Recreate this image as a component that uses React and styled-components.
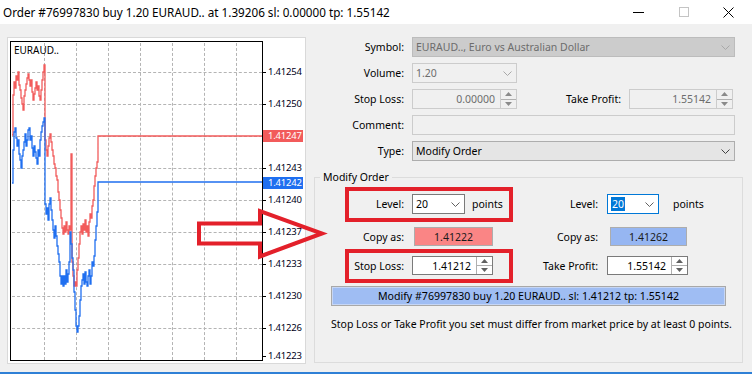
import React from 'react';
import styled, { createGlobalStyle } from 'styled-components';

const Global = createGlobalStyle`
  html, body { margin: 0; padding: 0; background: #f0f0f0; }
  body { font-family: "Noto Sans", "Open Sans", sans-serif; font-size: 10.5px; color: #000; }
  * { box-sizing: border-box; }
`;

const Window = styled.div`
  position: relative;
  width: 752px;
  height: 374px;
  overflow: hidden;
  background: #f0f0f0;
  display: flex;
  flex-direction: column;
`;

const TitleBar = styled.div`
  height: 24px;
  flex-shrink: 0;
  background: #fff;
  display: flex;
  align-items: center;
`;

const Title = styled.div`
  flex: 1;
  padding-left: 3px;
  font-size: 11.7px;
  white-space: nowrap;
`;

const Controls = styled.div`
  display: flex;
  height: 100%;
  margin-right: 1px;
`;

const CtrlBtn = styled.div`
  width: 45px;
  display: flex;
  align-items: center;
  justify-content: center;
`;

const Main = styled.div`
  flex: 1;
  display: flex;
`;

const BottomLine = styled.div`
  height: 2px;
  flex-shrink: 0;
  background: #2f80d6;
`;

const ChartPanel = styled.div`
  margin: 13px 0 0 7px;
  width: 299px;
  height: 327px;
  border: 1px solid #d9d9d9;
  background: #fff;
  display: flex;
  padding: 3px 0 0 2px;
`;

const Plot = styled.div`
  position: relative;
  width: 253px;
  height: 320px;
  border: 1px solid #000;
  flex-shrink: 0;
  background: #fff;
`;

const GridLineH = styled.div`
  position: absolute;
  left: 1px;
  right: 0;
  height: 0;
  border-top: 1px dashed #b4b4b4;
`;

const GridLineV = styled.div`
  position: absolute;
  top: 1px;
  bottom: 0;
  width: 0;
  border-left: 1px dashed #b4b4b4;
`;

const PlotSvg = styled.svg`
  display: block;
  position: relative;
  z-index: 1;
`;

const Symbol = styled.div`
  position: absolute;
  left: 3px;
  top: 1px;
  font-size: 10px;
  z-index: 2;
`;

const Axis = styled.div`
  position: relative;
  flex: 1;
`;

const AxisLabel = styled.div`
  position: absolute;
  left: 0;
  width: 40px;
  height: 12px;
  padding-left: 5px;
  font-size: 9.5px;
  line-height: 12px;
  letter-spacing: -0.2px;
  color: ${p => (p.bg ? '#fff' : '#000018')};
  background: ${p => p.bg || 'transparent'};
  &::before {
    content: '';
    position: absolute;
    left: 0;
    top: 6px;
    width: 3px;
    height: 1px;
    background: ${p => (p.bg ? 'transparent' : '#000')};
  }
`;

const FormPanel = styled.div`
  flex: 1;
  display: flex;
  flex-direction: column;
  padding-top: 13px;
`;

const Row = styled.div`
  display: flex;
  align-items: center;
  height: 20px;
  margin-bottom: ${p => p.mb ?? 6}px;
`;

const Label = styled.div`
  width: ${p => p.w}px;
  margin-right: ${p => p.gap ?? 8}px;
  text-align: right;
  flex-shrink: 0;
  white-space: nowrap;
`;

const variants = {
  symbol: { bg: '#cccccc', border: '#bcbcbc', color: '#6d6d6d' },
  disabled: { bg: '#f0f0f0', border: '#cccccc', color: '#6d6d6d' },
  combo: { bg: '#e5e5e5', border: '#adadad', color: '#000' },
  edit: { bg: '#ffffff', border: '#7a7a7a', color: '#000' },
  focus: { bg: '#ffffff', border: '#0078d7', color: '#000' },
};

const Field = styled.div`
  width: ${p => p.w}px;
  height: ${p => p.h || 20}px;
  margin-left: ${p => p.ml || 0}px;
  border: 1px solid ${p => variants[p.v].border};
  background: ${p => variants[p.v].bg};
  color: ${p => variants[p.v].color};
  display: flex;
  align-items: center;
  flex-shrink: 0;
`;

const FieldText = styled.div`
  flex: 1;
  padding: 0 ${p => (p.right ? 5 : 3)}px 0 ${p => (p.right ? 0 : 3)}px;
  text-align: ${p => (p.right ? 'right' : 'left')};
  white-space: nowrap;
  overflow: hidden;
`;

const Selected = styled.span`
  background: #0078d7;
  color: #fff;
  padding: 0 1px;
`;

const ChevronBox = styled.div`
  width: 17px;
  height: 100%;
  display: flex;
  align-items: center;
  justify-content: center;
`;

const SpinBox = styled.div`
  width: 16px;
  height: 100%;
  border-left: 1px solid ${p => p.c || '#cccccc'};
  display: flex;
  flex-direction: column;
`;

const SpinHalf = styled.div`
  flex: 1;
  display: flex;
  align-items: center;
  justify-content: center;
  & + & { border-top: 1px solid ${p => p.c || '#cccccc'}; }
`;

const Chevron = ({ color = '#606060' }) => (
  <ChevronBox>
    <svg width="9" height="5" viewBox="0 0 9 5">
      <polyline points="0.5,0.5 4.5,4.5 8.5,0.5" fill="none" stroke={color} strokeWidth="1" />
    </svg>
  </ChevronBox>
);

const Spinner = ({ c, tri = '#606060' }) => (
  <SpinBox c={c}>
    <SpinHalf c={c}>
      <svg width="7" height="4" viewBox="0 0 7 4"><polygon points="3.5,0 7,4 0,4" fill={tri} /></svg>
    </SpinHalf>
    <SpinHalf c={c}>
      <svg width="7" height="4" viewBox="0 0 7 4"><polygon points="0,0 7,0 3.5,4" fill={tri} /></svg>
    </SpinHalf>
  </SpinBox>
);

const Group = styled.fieldset`
  margin: 9px 0 0 8px;
  width: 429px;
  height: 193px;
  padding: 0;
  border: 1px solid #dcdcdc;
  min-width: 0;
`;

const Legend = styled.legend`
  margin-left: 5px;
  padding: 0 3px;
  line-height: 14px;
  font-size: 10.5px;
`;

const GroupBody = styled.div`
  padding-top: 10px;
  display: flex;
  flex-direction: column;
`;

const GRow = styled.div`
  display: flex;
  align-items: center;
  height: ${p => p.h || 20}px;
  margin-bottom: ${p => p.mb || 0}px;
`;

const Half = styled.div`
  display: flex;
  align-items: center;
  width: ${p => p.w}px;
  flex-shrink: 0;
`;

const Points = styled.div`
  margin-left: ${p => p.ml}px;
`;

const CopyBtn = styled.div`
  width: ${p => p.w}px;
  height: 19px;
  margin-left: ${p => p.ml}px;
  background: ${p => p.bg};
  border: 1px solid #adadad;
  display: flex;
  align-items: center;
  justify-content: center;
  color: #1a1a1a;
`;

const ModifyBtn = styled.div`
  margin-left: 16px;
  width: 395px;
  height: 20px;
  background: #9fbdf3;
  border: 1px solid #a8a8a8;
  box-shadow: inset 0 0 0 1px #c6d6f5;
  display: flex;
  align-items: center;
  justify-content: center;
  white-space: nowrap;
  font-size: 10.6px;
`;

const Note = styled.div`
  margin-top: 11px;
  padding-left: 16px;
  line-height: 14px;
  white-space: nowrap;
`;

const RedBox = styled.div`
  position: absolute;
  left: ${p => p.x}px;
  top: ${p => p.y}px;
  width: ${p => p.w}px;
  height: ${p => p.h}px;
  border: 4px solid #e3202a;
  pointer-events: none;
`;

const ArrowSvg = styled.svg`
  position: absolute;
  left: 190px;
  top: 200px;
  pointer-events: none;
  z-index: 3;
`;

/* chart data in page coordinates, shifted to plot-local */
const OX = 11;
const OY = 42;

const redPts = [
  [12,135],[13,95],[14,82],[15,88],[16,76],[17,80],[18,72],[19,85],[20,90],[21,98],[22,104],[23,110],[24,96],[25,90],
  [26,84],[27,78],[28,74],[29,80],[30,86],[31,80],[32,92],[33,100],[34,94],[35,88],[36,82],[37,90],[38,86],[39,96],
  [40,100],[41,90],[42,80],[43,72],[44,65],[45,140],[46,150],[47,156],[48,146],[49,138],[50,134],[51,142],[52,150],
  [53,156],[54,164],[55,168],[56,176],[57,180],[58,192],[59,200],[60,210],[61,218],[62,228],[63,234],[64,226],
  [65,232],[66,222],[67,230],[68,234],[69,226],[70,230],[71,154],[72,262],[73,276],[74,286],[75,282],[76,286],
  [77,270],[78,258],[79,244],[80,232],[81,226],[82,234],[83,224],[84,230],[85,220],[86,232],[87,226],[88,236],
  [89,222],[90,214],[91,218],[92,206],[93,200],[94,186],[95,176],[96,168],[97,162],[98,136]
];

const bluePts = [
  [12,183],[13,150],[14,132],[15,128],[16,138],[17,146],[18,140],[19,154],[20,160],[21,168],[22,156],[23,150],
  [24,142],[25,134],[26,146],[27,140],[28,130],[29,128],[30,140],[31,136],[32,148],[33,156],[34,146],[35,152],
  [36,158],[37,164],[38,150],[39,156],[40,140],[41,132],[42,126],[43,122],[44,118],[45,204],[46,214],[47,208],
  [48,220],[49,204],[50,198],[51,210],[52,220],[53,230],[54,238],[55,226],[56,236],[57,246],[58,254],[59,262],
  [60,276],[61,284],[62,276],[63,286],[64,276],[65,284],[66,270],[67,282],[68,274],[69,262],[70,232],[71,244],
  [72,258],[73,270],[74,292],[75,310],[76,326],[77,332],[78,326],[79,316],[80,300],[81,286],[82,280],[83,274],
  [84,284],[85,272],[86,282],[87,286],[88,276],[89,270],[90,284],[91,276],[92,262],[93,266],[94,256],[95,240],
  [96,226],[97,212],[98,182]
];

const stepPath = pts => {
  let d = `M${pts[0][0] - OX} ${pts[0][1] - OY}`;
  for (let i = 1; i < pts.length; i++) {
    d += ` H${pts[i][0] - OX} V${pts[i][1] - OY}`;
  }
  return d;
};

const gridY = [72, 104, 136, 168, 200, 232, 264, 296, 328];
const gridX = [44, 76, 108, 140, 172, 204, 236];

const axisLabels = [
  { y: 72, t: '1.41254' },
  { y: 104, t: '1.41250' },
  { y: 136, t: '1.41247', bg: '#f25b5b' },
  { y: 168, t: '1.41243' },
  { y: 183, t: '1.41242', bg: '#1f6ff0' },
  { y: 200, t: '1.41240' },
  { y: 232, t: '1.41237' },
  { y: 264, t: '1.41233' },
  { y: 296, t: '1.41230' },
  { y: 328, t: '1.41226' },
  { y: 356, t: '1.41223' },
];

const Chart = () => (
  <ChartPanel>
    <Plot>
      {gridY.map(y => (
        <GridLineH key={'h' + y} style={{ top: y - 42 }} />
      ))}
      {gridX.map(x => (
        <GridLineV key={'v' + x} style={{ left: x - 11 }} />
      ))}
      <PlotSvg width="251" height="318" viewBox="0 0 251 318">
        <path d={stepPath(redPts) + ` H${262 - OX}`} fill="none" stroke="#f25b5b" strokeWidth="1.3" />
        <path d={stepPath(bluePts) + ` H${262 - OX}`} fill="none" stroke="#1f6ff0" strokeWidth="1.3" />
      </PlotSvg>
      <Symbol>EURAUD..</Symbol>
    </Plot>
    <Axis>
      {axisLabels.map(l => (
        <AxisLabel key={l.t} bg={l.bg} style={{ top: l.y - 41 - 6 }}>
          {l.t}
        </AxisLabel>
      ))}
    </Axis>
  </ChartPanel>
);

export default function App() {
  return (
    <Window>
      <Global />
      <TitleBar>
        <Title>Order #76997830 buy 1.20 EURAUD.. at 1.39206 sl: 0.00000 tp: 1.55142</Title>
        <Controls>
          <CtrlBtn>
            <svg width="11" height="1"><rect width="11" height="1" fill="#000" /></svg>
          </CtrlBtn>
          <CtrlBtn>
            <svg width="10" height="10"><rect x="0.5" y="0.5" width="9" height="9" fill="none" stroke="#c4c4c4" /></svg>
          </CtrlBtn>
          <CtrlBtn>
            <svg width="11" height="11" viewBox="0 0 11 11">
              <path d="M0.5 0.5 L10.5 10.5 M10.5 0.5 L0.5 10.5" stroke="#000" strokeWidth="1" />
            </svg>
          </CtrlBtn>
        </Controls>
      </TitleBar>
      <Main>
        <Chart />
        <FormPanel>
          <Row>
            <Label w={98}>Symbol:</Label>
            <Field v="symbol" w={323}>
              <FieldText>EURAUD.., Euro vs Australian Dollar</FieldText>
              <Chevron color="#a8a8a8" />
            </Field>
          </Row>
          <Row>
            <Label w={98}>Volume:</Label>
            <Field v="disabled" w={105}>
              <FieldText>1.20</FieldText>
              <Chevron color="#a8a8a8" />
            </Field>
          </Row>
          <Row>
            <Label w={98}>Stop Loss:</Label>
            <Field v="disabled" w={105}>
              <FieldText right>0.00000</FieldText>
              <Spinner tri="#8a8a8a" />
            </Field>
            <Label w={104}>Take Profit:</Label>
            <Field v="disabled" w={104}>
              <FieldText right>1.55142</FieldText>
              <Spinner tri="#8a8a8a" />
            </Field>
          </Row>
          <Row>
            <Label w={98}>Comment:</Label>
            <Field v="disabled" w={323} />
          </Row>
          <Row mb={0}>
            <Label w={98}>Type:</Label>
            <Field v="combo" w={323}>
              <FieldText>Modify Order</FieldText>
              <Chevron color="#404040" />
            </Field>
          </Row>
          <Group>
            <Legend>Modify Order</Legend>
            <GroupBody>
              <GRow mb={13}>
                <Half w={200}>
                  <Label w={89}>Level:</Label>
                  <Field v="edit" w={53}>
                    <FieldText>20</FieldText>
                    <Chevron />
                  </Field>
                  <Points ml={7}>points</Points>
                </Half>
                <Half w={220}>
                  <Label w={83} gap={9}>Level:</Label>
                  <Field v="focus" w={52}>
                    <FieldText><Selected>20</Selected></FieldText>
                    <Chevron />
                  </Field>
                  <Points ml={14}>points</Points>
                </Half>
              </GRow>
              <GRow h={19} mb={10}>
                <Half w={200}>
                  <Label w={89}>Copy as:</Label>
                  <CopyBtn w={79} ml={2} bg="#fa8585">1.41222</CopyBtn>
                </Half>
                <Half w={220}>
                  <Label w={83} gap={9}>Copy as:</Label>
                  <CopyBtn w={77} ml={3} bg="#96b6f2">1.41262</CopyBtn>
                </Half>
              </GRow>
              <GRow h={19} mb={11}>
                <Half w={200}>
                  <Label w={89}>Stop Loss:</Label>
                  <Field v="edit" w={81} h={19}>
                    <FieldText right>1.41212</FieldText>
                    <Spinner c="#b0b0b0" />
                  </Field>
                </Half>
                <Half w={220}>
                  <Label w={83} gap={9}>Take Profit:</Label>
                  <Field v="edit" w={81} h={19}>
                    <FieldText right>1.55142</FieldText>
                    <Spinner c="#b0b0b0" />
                  </Field>
                </Half>
              </GRow>
              <GRow>
                <ModifyBtn>Modify #76997830 buy 1.20 EURAUD.. sl: 1.41212 tp: 1.55142</ModifyBtn>
              </GRow>
              <Note>Stop Loss or Take Profit you set must differ from market price by at least 0 points.</Note>
            </GroupBody>
          </Group>
        </FormPanel>
      </Main>
      <BottomLine />
      <RedBox x={345} y={187} w={168} h={35} />
      <RedBox x={345} y={249} w={168} h={34} />
      <ArrowSvg width="140" height="65" viewBox="190 200 140 65">
        <polygon
          points="199,223.5 260,223.5 260,211 322,233.5 260,256.5 260,243.5 199,243.5"
          fill="none"
          stroke="#e3202a"
          strokeWidth="4"
          strokeLinejoin="miter"
        />
      </ArrowSvg>
    </Window>
  );
}
